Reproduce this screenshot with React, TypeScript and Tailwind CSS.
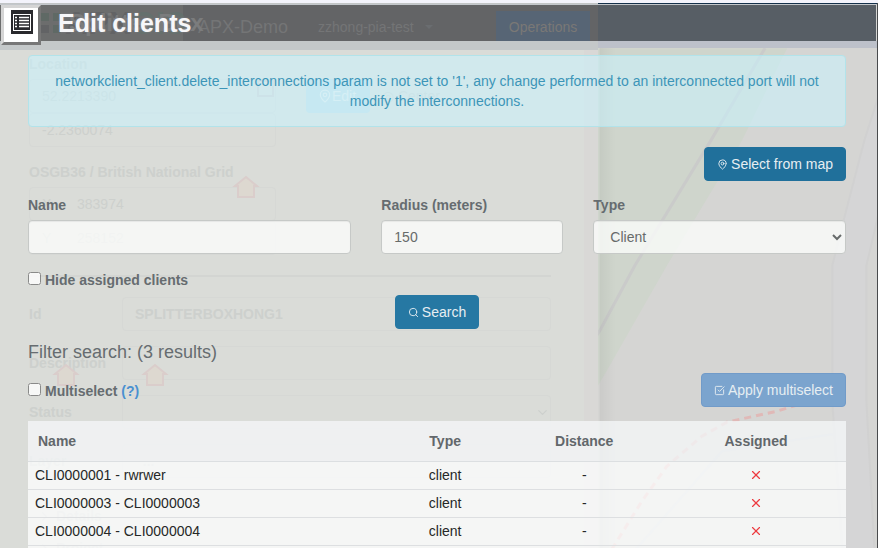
import React from "react";
import { MapPin, Search, SquareCheckBig, X, ChevronDown, ChevronRight } from "lucide-react";

const clients = [
  { name: "CLI0000001 - rwrwer", type: "client", distance: "-" },
  { name: "CLI0000003 - CLI0000003", type: "client", distance: "-" },
  { name: "CLI0000004 - CLI0000004", type: "client", distance: "-" },
];

const ghostBox = "h-[34px] border border-[#d6d8d5] rounded-sm px-3 flex items-center";

function MapDrawing() {
  return (
    <svg
      className="absolute inset-0 h-full w-full"
      viewBox="0 0 878 548"
      preserveAspectRatio="xMinYMin slice"
      fill="none"
    >
      <defs>
        <linearGradient id="panelShadow" x1="598" x2="614" y1="0" y2="0" gradientUnits="userSpaceOnUse">
          <stop offset="0" stopColor="#000" stopOpacity="0.05" />
          <stop offset="1" stopColor="#000" stopOpacity="0" />
        </linearGradient>
      </defs>
      <rect width="878" height="548" fill="#d5d5d3" />
      <path d="M560 48H785L740 140L665 265L605 370L500 548H560Z" fill="#cfd5cc" />
      <path d="M878 90L862 140L840 225L830 265V400L840 548H872L864 400V265L878 210Z" fill="#d5d5d6" />
      <path d="M878 90L862 140L840 225L830 265V400L840 548M878 205L864 265V400L872 548" stroke="#d1d1d1" strokeWidth="2" />
      <path d="M763 48L709 140L633 265L598 330L540 420L467 548" stroke="#cacbca" strokeWidth="3" />
      <path d="M634 548L720 450L830 433" stroke="#cfd1d5" strokeWidth="2" />
      <path
        d="M610 548L640 500L665 465L700 435L725 421L775 410L830 393"
        stroke="#e0b9b7"
        strokeWidth="3"
        strokeDasharray="7 5"
      />
      <rect x="598" width="18" height="548" fill="url(#panelShadow)" />
    </svg>
  );
}

function HouseMarker({ className }: { className: string }) {
  return (
    <svg className={"absolute h-6 w-7 " + className} viewBox="0 0 28 24" fill="#ddd8d0" stroke="#dacdcb" strokeWidth="2">
      <path d="M14 2L3 11H6V22H22V11H25Z" />
    </svg>
  );
}

function Backdrop() {
  return (
    <div aria-hidden="true" className="absolute inset-0 overflow-hidden">
      <MapDrawing />
      <div className="relative flex h-full w-[598px] flex-col bg-[#dadcd8]/95 text-[#cdd0cd]">
        <div className="h-[54px] shrink-0" />
        <div className="flex flex-col pl-[29px] pr-[47px]">
          <div className="h-5 font-bold leading-5">Location</div>
          <div className="mt-[5px] flex items-start">
            <div className="w-[247px]">
              <div className={ghostBox}>52.2213390</div>
              <div className={ghostBox}>-2.2360074</div>
            </div>
            <div className="ml-[30px] flex h-[34px] w-16 items-center rounded bg-[#c0dae2] pl-3 text-[#e4e8e8]">
              <MapPin size={14} /> Edit
            </div>
            <div className="flex h-[34px] items-center pl-3">◎ Center</div>
          </div>
          <div className="mt-[15px] h-5 font-bold leading-5">OSGB36 / British National Grid</div>
          <div className="mt-[5px] w-[247px]">
            <div className={ghostBox}><span className="w-[35px]">X</span>383974</div>
            <div className={ghostBox}><span className="w-[35px]">Y</span>258152</div>
          </div>
          <div className="mt-5 h-0.5 bg-[#d3d5d2]" />
          <div className="mt-5 flex items-center font-bold">
            <span className="w-[93px]">Id</span>
            <div className={ghostBox + " flex-1"}>SPLITTERBOXHONG1</div>
          </div>
          <div className="mt-[15px] flex items-center font-bold">
            <span className="w-[93px]">Description</span>
            <div className={ghostBox + " flex-1"} />
          </div>
          <div className="mt-[15px] flex items-center font-bold">
            <span className="w-[93px]">Status</span>
            <div className={ghostBox + " flex-1 justify-end !px-0"}><ChevronDown size={15} /></div>
          </div>
          <div className="mt-[15px] flex items-center font-bold">
            <span className="w-[93px]">Layer</span>
            <div className={ghostBox + " flex-1"}>&nbsp;&nbsp;...</div>
          </div>
          <div className="mt-7 flex items-center gap-1 pl-2 font-bold leading-5"><ChevronRight size={15} />Details</div>
          <div className="mt-3 flex items-center gap-1 pl-2 font-bold leading-5"><ChevronRight size={15} />Project</div>
        </div>
      </div>
      <div className="absolute bottom-0 left-[584px] top-[50px] w-[14px] bg-[#d9d8d6]" />
      <HouseMarker className="left-[232px] top-[175px]" />
      <HouseMarker className="left-[52px] top-[363px]" />
      <HouseMarker className="left-[141px] top-[363px]" />
      <div className="absolute left-[257px] top-[80px] h-[17px] w-[17px] border-2 border-[#d0cccd]" />
    </div>
  );
}

function HeaderGhost() {
  return (
    <div aria-hidden="true" className="absolute inset-0 flex overflow-hidden text-[#747576]">
      <div className="relative flex w-[598px] shrink-0 items-center bg-[#636466]">
        <div className="flex h-full w-[183px] shrink-0 items-center gap-1 bg-[#6c6d6d] pl-[41px] text-[38px] font-bold leading-9 text-[#626365]">
          <span className="grid shrink-0 grid-cols-2 gap-1">
            <i className="h-2 w-2 bg-[#5f6965]" />
            <i className="h-2 w-2 bg-[#5f6965]" />
            <i className="h-2 w-2 bg-[#626365]" />
            <i className="h-2 w-2 bg-[#5f6965]" />
          </span>
          <span className="text-[32px]">APX<span className="text-[#65706d]">GIS</span></span>
        </div>
        <span className="absolute left-[69px] text-2xl font-bold leading-9 text-[#7b7c7d]">Splitter Box</span>
        <span className="pl-[15px] pt-2 text-lg leading-6">APX-Demo</span>
        <span className="pl-[30px] pt-2">zzhong-pia-test</span>
        <span className="ml-[11px] mt-2 border-x-4 border-t-4 border-x-transparent border-t-[#6a6d70]" />
        <span className="ml-auto mr-2 mt-2 flex h-8 w-[94px] items-center justify-center bg-[#576575] text-[#7a7876]">
          Operations
        </span>
      </div>
      <div className="flex-1 bg-[#575e65]" />
    </div>
  );
}

function ListIcon() {
  return (
    <svg viewBox="0 0 22 24" className="h-6 w-[22px]" fill="none">
      <rect width="22" height="24" fill="#29292d" />
      <rect x="2.5" y="4.5" width="17" height="16" stroke="#fff" />
      <path d="M4 7.5H6M8 7.5H18M4 10.5H6M8 10.5H18M4 13.5H6M8 13.5H18M4 16.5H6M8 16.5H18" stroke="#fff" strokeWidth="1.5" />
    </svg>
  );
}

const label = "block font-bold leading-5 text-[#666c70]";
const field =
  "mt-[5px] block h-[34px] w-full rounded border border-[#c6c9c7] bg-[#fdfffd]/75 px-3 text-sm text-[#676b6a] shadow-[inset_0_1px_1px_rgba(0,0,0,0.06)]";
const button = "flex h-[34px] items-center gap-[3px] rounded border px-3 text-sm text-[#e6eef2]";
const check = "h-[13px] w-[13px] opacity-80";

export default function App() {
  return (
    <div className="relative min-h-screen overflow-hidden bg-[#dadcd8] font-['Liberation_Sans',Arial,sans-serif] text-sm">
      <Backdrop />
      <div className="relative">
        <header>
          <div className="h-[3px] bg-[#f3f3fb]" />
          <div className="flex h-px"><div className="w-[598px] bg-[#c2c5c6]" /><div className="flex-1 bg-[#14304a]" /></div>
          <div className="h-px bg-[#c3c7cb]" />
          <div className="relative mr-[2px] flex h-9 items-start">
            <HeaderGhost />
            <button
              type="button"
              aria-label="Menu"
              className="relative ml-px flex h-10 w-10 shrink-0 items-start justify-center border-[3px] border-b-[#777] border-l-[#d5d5d5] border-r-[#777] border-t-[#d5d5d5] bg-white pl-0.5 pt-0.5"
            >
              <ListIcon />
            </button>
            <h1 className="relative ml-[17px] text-[25px] font-bold leading-9 text-[#f7f7f9] [text-shadow:0_0_2px_#8a8a90]">
              Edit clients
            </h1>
          </div>
          <div className="flex items-start">
            <div className="h-[9px] w-[598px] bg-[#c4c8c9]" />
            <div className="h-[7px] flex-1 bg-[#bdc1ca]" />
          </div>
        </header>

        <main className="pl-7 pr-8">
          <div
            role="alert"
            className="mt-[5px] rounded border border-[#b2e3ea] bg-[#caf4ff]/55 p-[15px] text-center leading-5 text-[#3c95b8]"
          >
            networkclient_client.delete_interconnections param is not set to '1', any change performed to an
            interconnected port will not modify the interconnections.
          </div>

          <div className="mt-5 flex justify-end">
            <button type="button" className={button + " border-[#20709b] bg-[#20709b]"}>
              <MapPin size={11} /> Select from map
            </button>
          </div>

          <form onSubmit={(e) => e.preventDefault()}>
            <div className="mt-[14px] grid grid-cols-12 gap-x-[30px]">
              <div className="col-span-5">
                <label htmlFor="name" className={label}>Name</label>
                <input id="name" type="text" className={field} />
              </div>
              <div className="col-span-3">
                <label htmlFor="radius" className={label}>Radius (meters)</label>
                <input id="radius" type="text" defaultValue="150" className={field} />
              </div>
              <div className="col-span-4">
                <label htmlFor="type" className={label}>Type</label>
                <select id="type" className={field + " pr-0"}>
                  <option>Client</option>
                </select>
              </div>
            </div>
            <div className="mt-4 flex h-5 items-start gap-1">
              <input id="hide" type="checkbox" className={check + " mt-0.5"} />
              <label htmlFor="hide" className={label}>Hide assigned clients</label>
            </div>
            <div className="mt-[5px] flex justify-center">
              <button type="submit" className={button + " border-[#2678a3] bg-[#2678a3]"}>
                <Search size={11} /> Search
              </button>
            </div>
          </form>

          <h2 className="mt-[13px] text-lg leading-5 text-[#666c70]">Filter search: (3 results)</h2>

          <div className="mt-[11px] flex justify-between">
            <div className="flex items-start gap-1 pt-2">
              <input id="multi" type="checkbox" className={check + " mt-0.5"} />
              <label htmlFor="multi" className={label}>Multiselect</label>
              <a href="#help" className="font-bold leading-5 text-[#4a90d0]">(?)</a>
            </div>
            <button type="button" className={button + " border-[#719bc9] bg-[#7ba4ce]"}>
              <SquareCheckBig size={11} /> Apply multiselect
            </button>
          </div>

          <div className="mt-[14px] bg-[#feffff]/75 pb-1">
            <table className="w-full table-fixed border-collapse text-center">
              <thead>
                <tr className="h-10 border-b border-[#dcdfe1] bg-[#d9dddf]/20 text-[#62676b]">
                  <th className="w-[44%] pl-[10px] text-left">Name</th>
                  <th className="w-[14%]">Type</th>
                  <th className="w-[20%]">Distance</th>
                  <th className="w-[22%]">Assigned</th>
                </tr>
              </thead>
              <tbody className="text-[#262827]">
                {clients.map((c) => (
                  <tr key={c.name} className="h-7 border-b border-[#dddfe1]">
                    <td className="pl-[7px] text-left">{c.name}</td>
                    <td>{c.type}</td>
                    <td>{c.distance}</td>
                    <td><X size={14} strokeWidth={2} className="mx-auto text-[#ed3b40]" /></td>
                  </tr>
                ))}
              </tbody>
            </table>
          </div>
        </main>
      </div>
      <div className="absolute bottom-0 right-0 top-[3px] w-px bg-[#484a4c]" />
    </div>
  );
}
